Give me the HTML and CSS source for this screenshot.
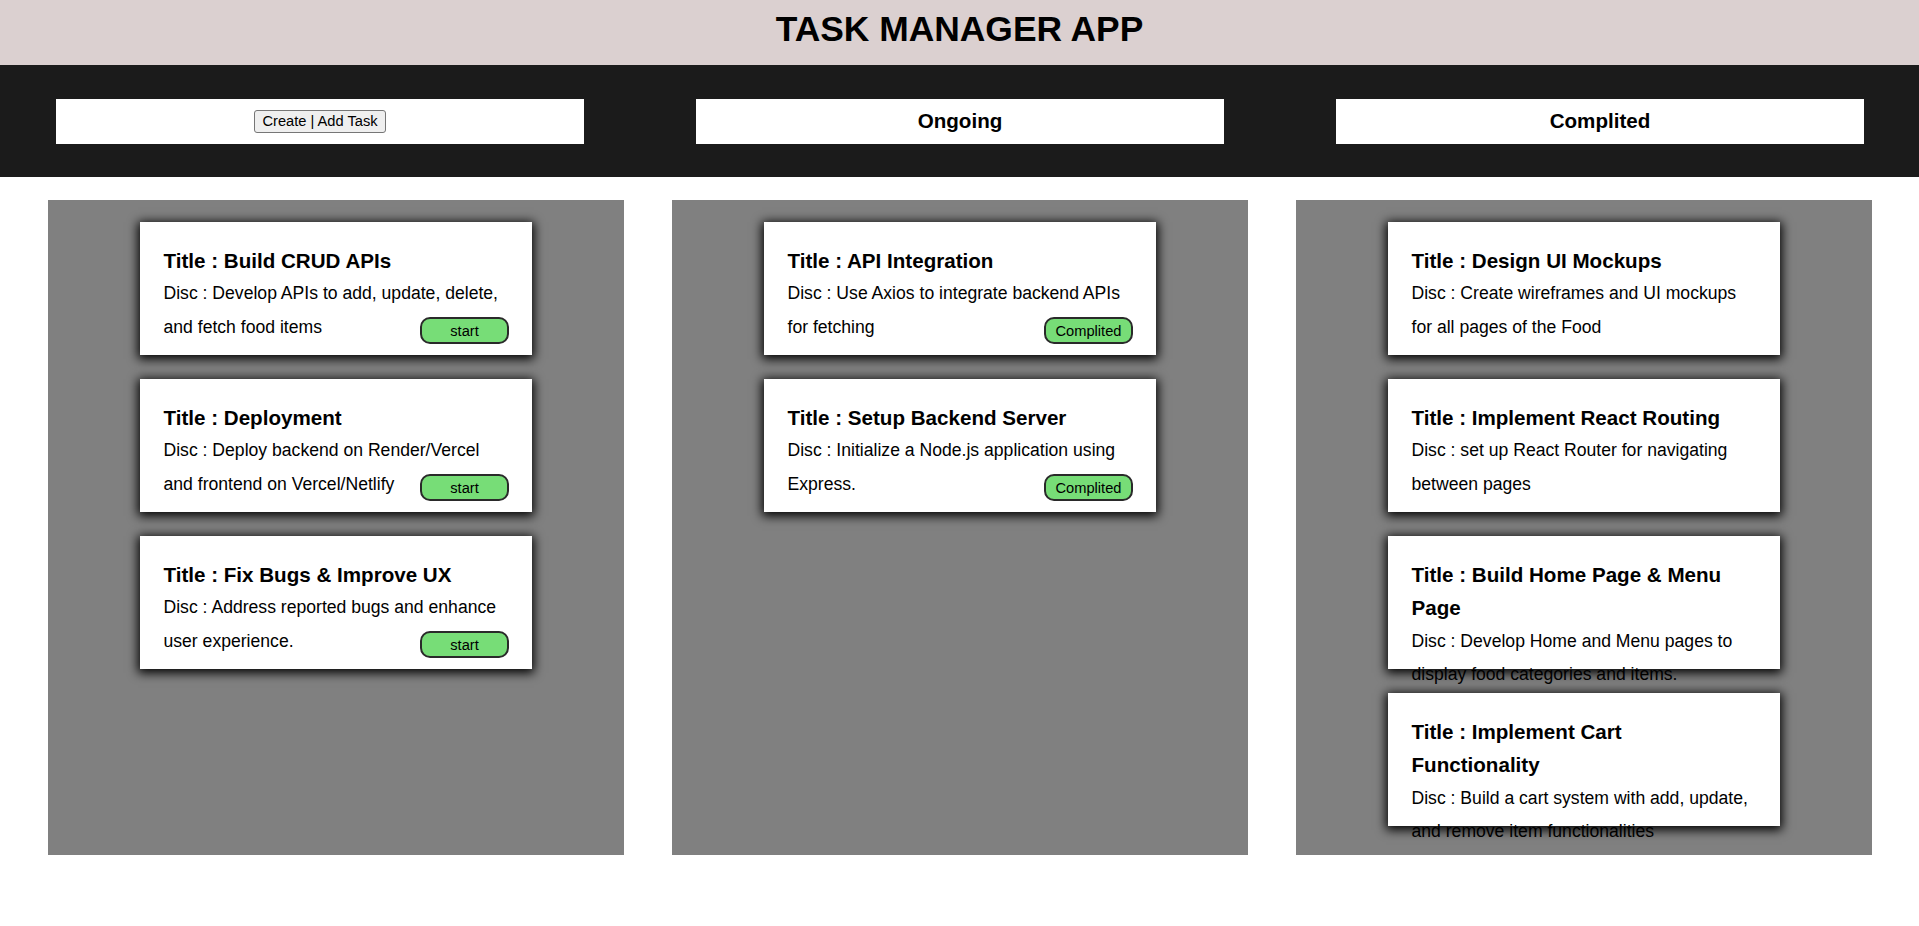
FILE: index.html
```html
<!DOCTYPE html>
<html lang="en">
<head>
<meta charset="utf-8">
<title>Task Manager App</title>
<link rel="stylesheet" href="styles.css">
</head>
<body>
<header class="app-header">
  <h1 class="app-title">TASK MANAGER APP</h1>
</header>
<nav class="status-bar">
  <div class="status-box"><button class="create-btn">Create | Add Task</button></div>
  <div class="status-box"><h3 class="status-title">Ongoing</h3></div>
  <div class="status-box"><h3 class="status-title">Complited</h3></div>
</nav>
<main class="board">
  <section class="column">
    <div class="card">
      <h3 class="card-title">Title : Build CRUD APIs</h3>
      <p class="card-desc">Disc : Develop APIs to add, update, delete, and fetch food items</p>
      <button class="action-btn">start</button>
    </div>
    <div class="card">
      <h3 class="card-title">Title : Deployment</h3>
      <p class="card-desc">Disc : Deploy backend on Render/Vercel and frontend on Vercel/Netlify</p>
      <button class="action-btn">start</button>
    </div>
    <div class="card">
      <h3 class="card-title">Title : Fix Bugs &amp; Improve UX</h3>
      <p class="card-desc">Disc : Address reported bugs and enhance user experience.</p>
      <button class="action-btn">start</button>
    </div>
  </section>
  <section class="column">
    <div class="card">
      <h3 class="card-title">Title : API Integration</h3>
      <p class="card-desc">Disc : Use Axios to integrate backend APIs for fetching</p>
      <button class="action-btn">Complited</button>
    </div>
    <div class="card">
      <h3 class="card-title">Title : Setup Backend Server</h3>
      <p class="card-desc">Disc : Initialize a Node.js application using Express.</p>
      <button class="action-btn">Complited</button>
    </div>
  </section>
  <section class="column">
    <div class="card">
      <h3 class="card-title">Title : Design UI Mockups</h3>
      <p class="card-desc">Disc : Create wireframes and UI mockups for all pages of the Food</p>
    </div>
    <div class="card">
      <h3 class="card-title">Title : Implement React Routing</h3>
      <p class="card-desc">Disc : set up React Router for navigating between pages</p>
    </div>
    <div class="card">
      <h3 class="card-title">Title : Build Home Page &amp; Menu Page</h3>
      <p class="card-desc">Disc : Develop Home and Menu pages to display food categories and items.</p>
    </div>
    <div class="card">
      <h3 class="card-title">Title : Implement Cart Functionality</h3>
      <p class="card-desc">Disc : Build a cart system with add, update, and remove item functionalities</p>
    </div>
  </section>
</main>
</body>
</html>
```

FILE: styles.css
```css
* {
  box-sizing: border-box;
}

html, body {
  margin: 0;
  padding: 0;
}

body {
  font-family: "Liberation Sans", Arial, sans-serif;
  color: #000;
  background: #fff;
}

.app-header {
  height: 65px;
  padding-top: 9px;
  background: #dbd0d0;
}

.app-title {
  margin: 0;
  font-size: 35.4px;
  font-weight: bold;
  line-height: normal;
  text-align: center;
}

.status-bar {
  display: flex;
  gap: 112px;
  background: #1b1b1b;
  padding: 34px 0 33px 56px;
}

.status-box {
  width: 528px;
  height: 45px;
  background: #fff;
  display: flex;
  align-items: center;
  justify-content: center;
}

.status-title {
  margin: 0;
  font-size: 20.6px;
  font-weight: bold;
  line-height: normal;
  padding-bottom: 1px;
}

.create-btn {
  height: 23px;
  padding: 0 7.6px;
  font-family: "Liberation Sans", Arial, sans-serif;
  font-size: 14.67px;
  color: #000;
  background: #efefef;
  border: 1px solid #767676;
  border-radius: 3px;
  margin-bottom: 1px;
}

.board {
  display: flex;
  gap: 48px;
  padding-left: 48px;
  margin-top: 23px;
}

.column {
  width: 576px;
  height: 655px;
  background: #808080;
  display: flex;
  flex-direction: column;
  align-items: center;
  gap: 24px;
  padding-top: 22px;
}

.card {
  position: relative;
  width: 392px;
  height: 133px;
  flex: none;
  background: #fff;
  padding: 21.5px 28.5px 0 23.5px;
  box-shadow: 0 2px 10px 2px #000;
  line-height: 33.6px;
}

.card-title {
  margin: 0;
  font-size: 20.6px;
  font-weight: bold;
  line-height: 33.6px;
}

.card-desc {
  margin: 0;
  font-size: 17.6px;
  line-height: 33.6px;
}

.action-btn {
  position: absolute;
  right: 23px;
  bottom: 11px;
  width: 89px;
  height: 27px;
  padding: 0;
  font-family: "Liberation Sans", Arial, sans-serif;
  font-size: 14.67px;
  color: #000;
  background: #77dd77;
  border: 2px solid #2a2a2a;
  border-radius: 10px;
}
```
